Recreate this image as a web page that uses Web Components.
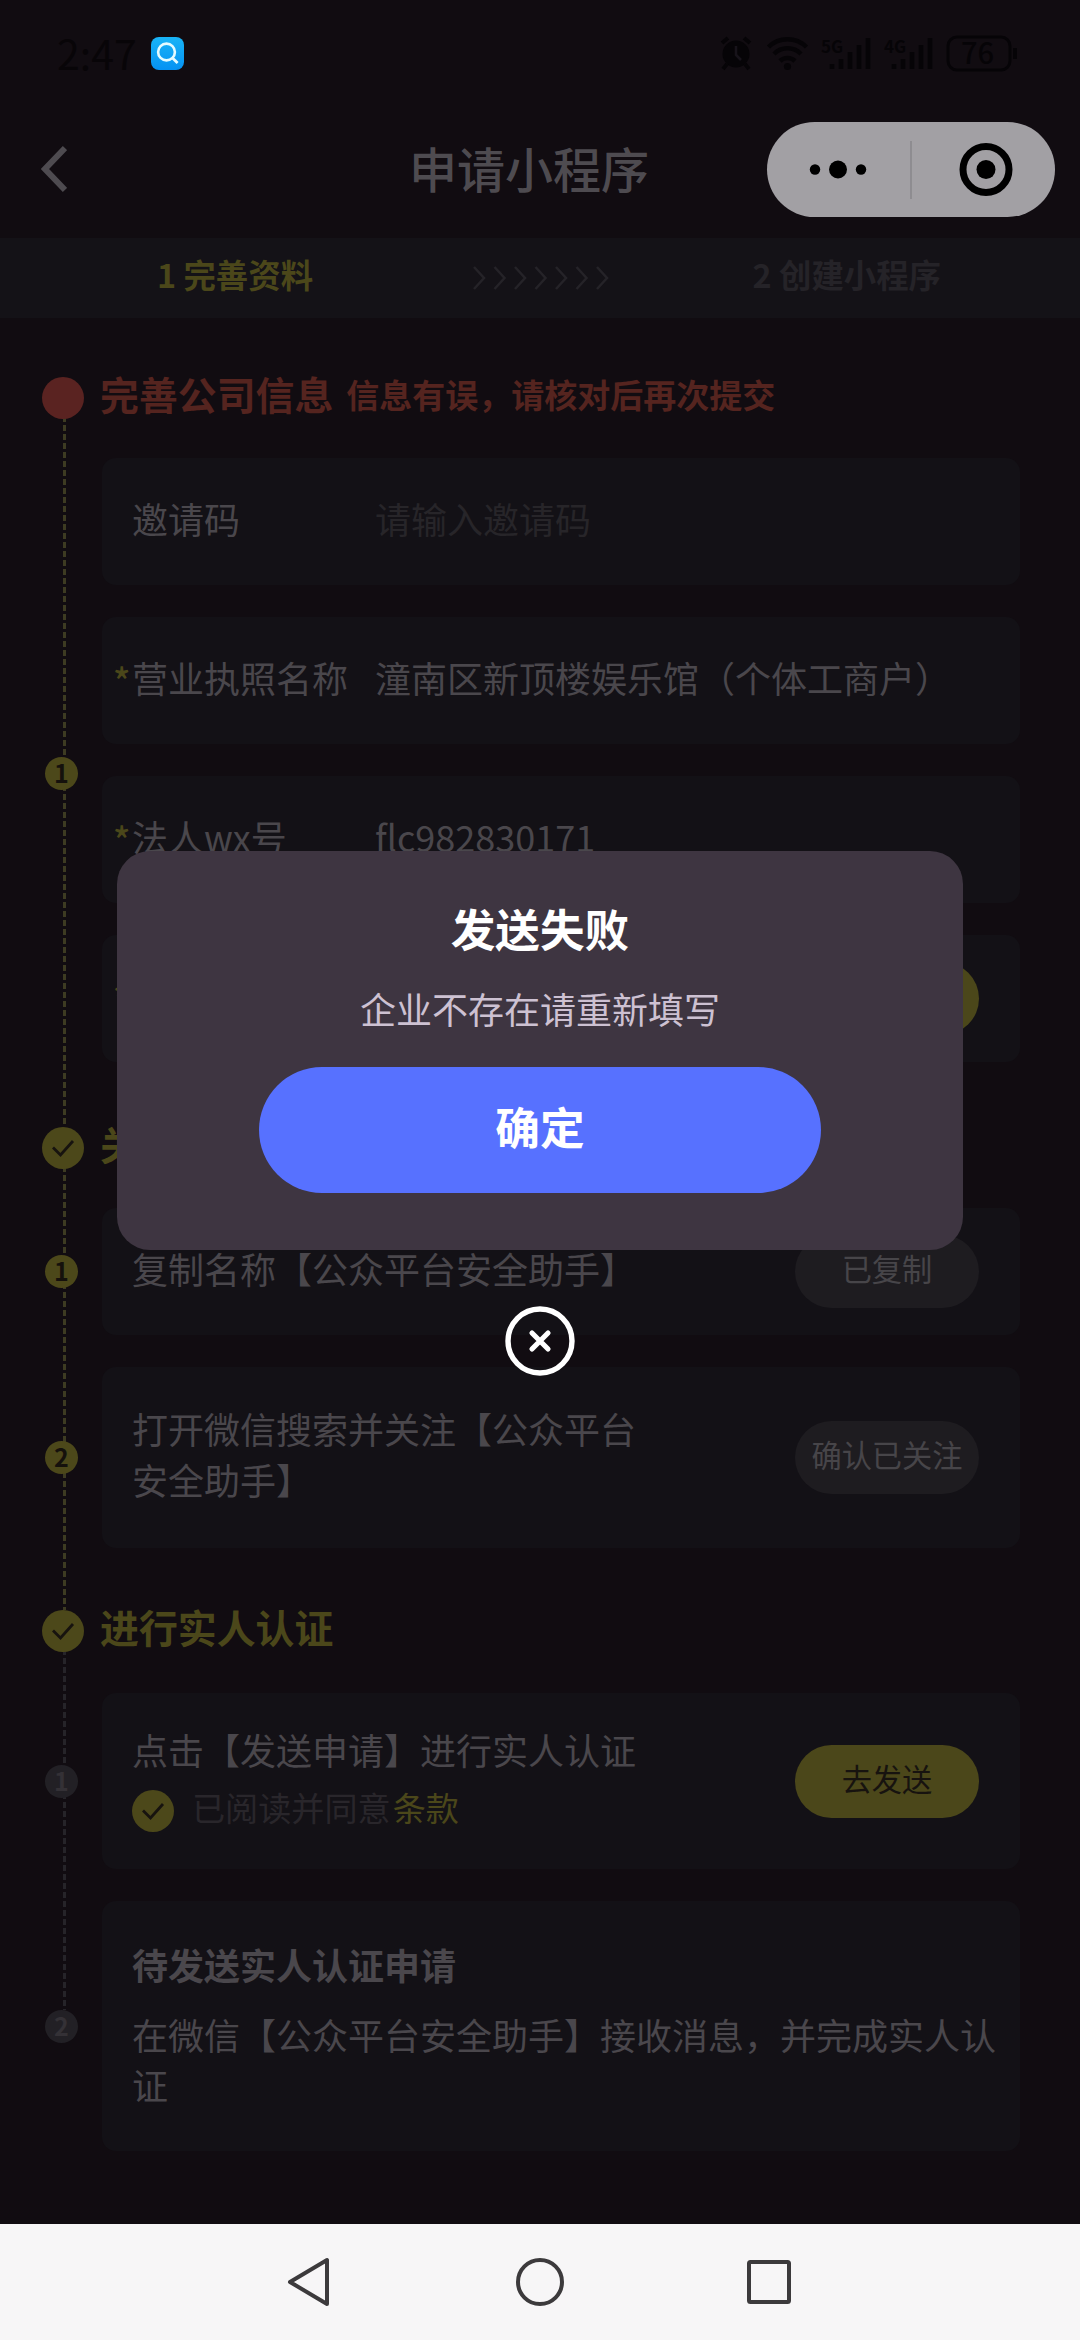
<!DOCTYPE html>
<html lang="zh-CN">
<head>
<meta charset="utf-8">
<title>申请小程序</title>
<style>
html,body{margin:0;padding:0;background:#110c11}
body{font-family:"Noto Sans CJK SC",sans-serif;width:1080px;height:2340px;overflow:hidden}
</style>
</head>
<body>
<app-screen></app-screen>
<script>
const define = (name, html) => {
  const t = document.createElement('template');
  t.innerHTML = html;
  customElements.define(name, class extends HTMLElement {
    constructor() {
      super();
      this.attachShadow({mode: 'open'}).appendChild(t.content.cloneNode(true));
    }
  });
};

define('status-bar', `
<style>
:host{display:flex;align-items:center;height:106px;padding:0 63px 0 57px;box-sizing:border-box;color:#080508}
.time{font:400 41px/50px "Noto Sans CJK SC",sans-serif;width:94px;margin-top:-3px}
.right{margin-left:auto;display:block}
svg{display:block;overflow:visible}
text{font-family:"Noto Sans CJK SC",sans-serif}
</style>
<span class="time">2:47</span>
<svg width="33" height="33" viewBox="0 0 33 33"><defs><linearGradient id="g" x1="0" y1="0" x2="0" y2="1"><stop offset="0" stop-color="#19b4f6"/><stop offset="1" stop-color="#0592f3"/></linearGradient></defs><rect width="33" height="33" rx="8" fill="url(#g)"/><circle cx="15.5" cy="15" r="8.4" fill="none" stroke="#e4fbff" stroke-width="2.6"/><path d="M21 20.5l5.6 5.6" stroke="#e4fbff" stroke-width="2.8"/></svg>
<svg class="right" width="298" height="60" viewBox="719 23 298 60">
 <g fill="none" stroke="#060407">
  <circle cx="736" cy="54" r="13.5" fill="#060407" stroke="none"/><path d="M722 43l6-5M750 43l-6-5M727 64l-4 5M745 64l4 5" stroke-width="4"/><path d="M736 46v9l5 5" stroke="#17131a" stroke-width="2.6"/>
  <path d="M768.500 47a27 27 0 0 1 38 0M774 54a19 19 0 0 1 27 0M780 61a11 11 0 0 1 15 0" stroke-width="4.500"/><circle cx="787.500" cy="66.500" r="3.600" fill="#060407" stroke="none"/>
  <path d="M832 69v-5M841 69v-10M850 69v-17M859 69v-24M868 69V38" stroke-width="4.600"/>
  <path d="M894 69v-5M903 69v-10M912 69v-17M921 69v-24M930 69V38" stroke-width="4.600"/>
  <rect x="948" y="37" width="62" height="33" rx="9" stroke-width="3"/><path d="M1015 48v11" stroke-width="4"/>
 </g>
 <g fill="#060407" font-weight="700"><text x="821" y="53" font-size="17">5G</text><text x="884" y="53" font-size="17">4G</text><text x="961" y="64" font-size="29" font-weight="500">76</text></g>
</svg>`);

define('capsule-menu', `
<style>:host{display:block;width:288px;height:95px;border-radius:48px;background:#a2a0a4}svg{display:block}</style>
<svg width="288" height="95" viewBox="0 0 288 95"><g fill="#000"><circle cx="48" cy="47.500" r="5.200"/><circle cx="71" cy="47.500" r="9"/><circle cx="94" cy="47.500" r="5.200"/><circle cx="219" cy="47.500" r="9.500"/></g><path d="M144 19v58" stroke="#8a888c" stroke-width="1.600"/><circle cx="219" cy="47.500" r="23" fill="none" stroke="#000" stroke-width="7"/></svg>`);

define('nav-header', `
<style>
:host{display:flex;align-items:center;height:132px;padding:0 25px 6px 41px;box-sizing:border-box}
h1{margin:0 0 5px 342px;font-size:48px;line-height:60px;font-weight:500;color:#4e4b50;white-space:nowrap}
capsule-menu{margin-left:auto}
</style>
<svg width="26" height="48" viewBox="0 0 26 48"><path d="M24 3L4 24l20 21" fill="none" stroke="#4e4b50" stroke-width="6"/></svg>
<h1><slot></slot></h1><capsule-menu></capsule-menu>`);

define('step-tabs', `
<style>
:host{display:flex;align-items:center;height:80px;background:#141217;font-size:32.400px;line-height:40px;font-weight:700;white-space:nowrap;box-sizing:border-box;padding:0 139px 8px 157px}
.on{color:#4b471a;width:315px}.off{color:#252328;margin-left:auto}
svg{margin-top:8px}
</style>
<span class="on">1 完善资料</span>
<svg width="138" height="24" viewBox="0 0 138 24"><path d="M2 1l10 11L2 23M22.500 1l10 11-10 11M43 1l10 11-10 11M63.500 1l10 11-10 11M84 1l10 11-10 11M104.500 1l10 11-10 11M125 1l10 11-10 11" fill="none" stroke="#252328" stroke-width="2.500"/></svg>
<span class="off">2 创建小程序</span>`);

define('check-dot', `
<style>:host{display:block;width:42px;height:42px;flex:none}svg{display:block}
:host([error]) circle{fill:#5a2321}:host([error]) path{display:none}</style>
<svg width="42" height="42" viewBox="0 0 42 42"><circle cx="21" cy="21" r="21" fill="#4c481a"/><path d="M11 20.500l7.500 7.500L31 14" fill="none" stroke="#17130f" stroke-width="2.800"/></svg>`);

define('step-marker', `
<style>:host{display:flex;flex:none;width:33px;height:33px;box-sizing:border-box;padding-bottom:3px;border-radius:50%;align-items:center;justify-content:center;background:#4c481a;color:#15110c;font-size:25px;line-height:30px;font-weight:700}
:host([idle]){background:#222025;color:#343136}</style><slot></slot>`);

define('flow-section', `
<style>
:host{display:block;box-sizing:border-box;padding-left:42px;
 --dash:#3d3b22;
 background:repeating-linear-gradient(to bottom,var(--dash) 0 6px,transparent 6px 9px) 63px 21px/3px 100% no-repeat}
:host([idle]){--dash:#262429}
header{display:flex;align-items:center;height:42px;color:#4b471a}
:host([error]) header{color:#55241f}
b{margin-left:16px;font-size:38.880px;line-height:50px;margin-top:-10px;white-space:nowrap}
::slotted([slot=note]){font-size:33px;line-height:50px;font-weight:700;margin:-8px 0 0 13px;white-space:nowrap}
.body{display:flex;flex-direction:column;gap:32px;padding-top:var(--lead,39px)}
</style>
<header><slot name="dot"></slot><b><slot name="title"></slot></b><slot name="note"></slot></header>
<div class="body"><slot></slot></div>`);

define('flow-step', `
<style>:host{display:flex;align-items:center;padding-left:3px}
.marker{margin:var(--shift,0) 24px 0 0}
.cards{display:flex;flex-direction:column;gap:32px;width:918px}</style>
<div class="marker"><slot name="marker"></slot></div><div class="cards"><slot></slot></div>`);

define('info-card', `
<style>:host{display:flex;align-items:center;height:127px;box-sizing:border-box;border-radius:14px;background:#131116;padding:0 41px 0 30px;font-size:36px;line-height:50.400px;color:#4a474c}
.main{width:510px;padding-bottom:var(--lift,6px)}::slotted([slot=action]){margin-left:auto}</style>
<div class="main"><slot></slot></div><slot name="action"></slot>`);

define('field-card', `
<style>:host{display:flex;align-items:center;height:127px;box-sizing:border-box;border-radius:14px;background:#131116;font-size:36px;line-height:50px;color:#4a474c;white-space:nowrap;padding:0 41px 7px 11px}
.star{width:19px;color:#4b471a;font-weight:500;margin-top:4px}.label{width:243px}::slotted([slot=action]){margin:7px 0 0 auto}
::slotted([slot=placeholder]){color:#272529}</style>
<span class="star"><slot name="star"></slot></span><span class="label"><slot name="label"></slot></span><slot></slot><slot name="placeholder"></slot><slot name="action"></slot>`);

define('pill-button', `
<style>:host{display:flex;flex:none;align-items:center;justify-content:center;width:184px;height:73px;box-sizing:border-box;padding-bottom:7px;border-radius:37px;background:#1e1c20;color:#474549;font-size:30.240px;line-height:40px;white-space:nowrap}
:host([primary]){background:#4b471a;color:#17130f}</style><slot></slot>`);

define('agree-row', `
<style>:host{display:flex;align-items:center;height:42px;font-size:33.120px;line-height:42px;margin-top:16px;white-space:nowrap}
span{margin:-8px 2px 0 18px;color:#29262b}a{color:#4b471a;margin-top:-8px}</style>
<check-dot></check-dot><span><slot></slot></span><a><slot name="link"></slot></a>`);

define('result-dialog', `
<style>
:host{position:absolute;left:0;top:851px;width:1080px;display:flex;flex-direction:column;align-items:center}
.box{width:846px;height:399px;border-radius:33px;background:#3e3541;display:flex;flex-direction:column;align-items:center;box-sizing:border-box;padding-top:45px}
h2{margin:0;font-size:44.640px;line-height:64px;font-weight:700;color:#fff}
p{margin:23px 0 0;font-size:36px;line-height:50px;color:#cdc1d2}
button{margin-top:34px;width:562px;height:126px;border:0;border-radius:63px;background:#5771ff;color:#fff;font:700 44.640px/64px "Noto Sans CJK SC",sans-serif;padding:0 0 8px}
svg{margin-top:56px;display:block}
</style>
<div class="box"><h2><slot name="title"></slot></h2><p><slot></slot></p><button>确定</button></div>
<svg width="70" height="70" viewBox="0 0 70 70"><circle cx="35" cy="35" r="32" fill="none" stroke="#fff" stroke-width="5.400"/><path d="M27 27l16 16M43 27l-16 16" stroke="#fff" stroke-width="5.200" stroke-linecap="round"/></svg>`);

define('system-nav', `
<style>:host{display:flex;height:116px;background:#f7f6f7;justify-content:center;align-items:center;flex:none}
svg{display:block}</style>
<svg width="1080" height="116" viewBox="0 0 1080 116"><g fill="none" stroke="#3c3a3c" stroke-width="4" stroke-linejoin="round"><path d="M290 58L327 36v44z"/><circle cx="540" cy="58" r="22"/><rect x="749" y="38" width="40" height="40" rx="1.500"/></g></svg>`);

define('app-screen', `
<style>
:host{display:flex;flex-direction:column;position:relative;width:1080px;height:2340px;background:#110c11;overflow:hidden}
main{flex:1;padding-top:59px}
.s1{height:750px}.s2{height:483px}
.s3{--lead:41px;height:400px}
.first{--shift:26px}
.two{height:181px;--lift:8px}.three{height:176px}.four{height:250px;--lift:3px}
.strong{font-weight:700;display:block;margin-bottom:19px}
.text{width:866px;display:block}
</style>
<status-bar></status-bar>
<nav-header>申请小程序</nav-header>
<step-tabs></step-tabs>
<main>
 <flow-section class="s1" error>
  <check-dot slot="dot" error></check-dot><span slot="title">完善公司信息</span><span slot="note">信息有误，请核对后再次提交</span>
  <flow-step class="first"><step-marker slot="marker">1</step-marker>
   <field-card><span slot="label">邀请码</span><span slot="placeholder">请输入邀请码</span></field-card>
   <field-card><span slot="star">*</span><span slot="label">营业执照名称</span>潼南区新顶楼娱乐馆（个体工商户）</field-card>
   <field-card><span slot="star">*</span><span slot="label">法人wx号</span>flc982830171</field-card>
   <field-card><span slot="star">*</span><pill-button slot="action" primary></pill-button></field-card>
  </flow-step>
 </flow-section>
 <flow-section class="s2">
  <check-dot slot="dot"></check-dot><span slot="title">关</span>
  <flow-step><step-marker slot="marker">1</step-marker>
   <info-card>复制名称【公众平台安全助手】<pill-button slot="action">已复制</pill-button></info-card></flow-step>
  <flow-step><step-marker slot="marker">2</step-marker>
   <info-card class="two">打开微信搜索并关注【公众平台安全助手】<pill-button slot="action">确认已关注</pill-button></info-card></flow-step>
 </flow-section>
 <flow-section class="s3" idle>
  <check-dot slot="dot"></check-dot><span slot="title">进行实人认证</span>
  <flow-step><step-marker slot="marker" idle>1</step-marker>
   <info-card class="three">点击【发送申请】进行实人认证<agree-row>已阅读并同意<span slot="link">条款</span></agree-row><pill-button slot="action" primary>去发送</pill-button></info-card></flow-step>
  <flow-step><step-marker slot="marker" idle>2</step-marker>
   <info-card class="four"><span class="strong">待发送实人认证申请</span><span class="text">在微信【公众平台安全助手】接收消息，并完成实人认证</span></info-card></flow-step>
 </flow-section>
</main>
<system-nav></system-nav>
<result-dialog><span slot="title">发送失败</span>企业不存在请重新填写</result-dialog>`);
</script>
</body>
</html>
